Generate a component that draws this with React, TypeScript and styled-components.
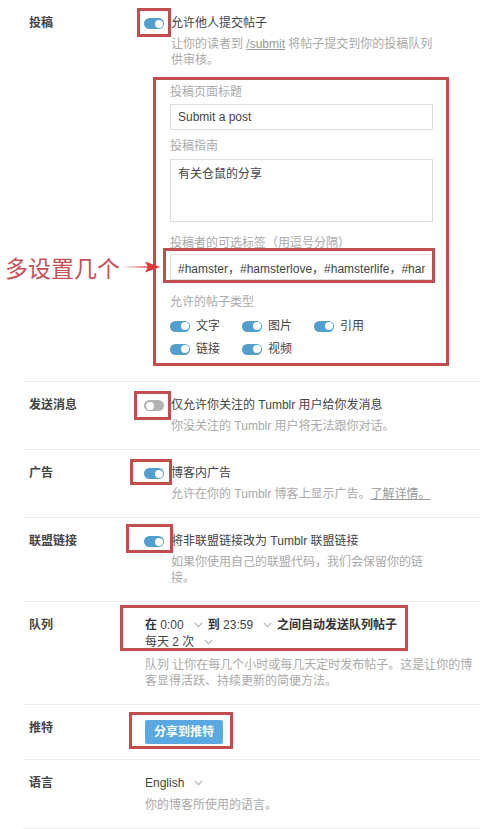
import React from "react";
import styled, { createGlobalStyle } from "styled-components";

const GlobalStyle = createGlobalStyle`
  body {
    margin: 0;
    background: #ffffff;
    font-family: "Liberation Sans", "Noto Sans CJK SC", sans-serif;
    font-size: 12px;
    color: #444444;
  }
`;

const Page = styled.div`
  width: 497px;
  position: relative;
`;

const SettingRow = styled.div<{ $last?: boolean }>`
  display: flex;
  margin-left: 23px;
  width: 457px;
  box-sizing: border-box;
  padding: 15px 0 15px 6px;
  border-bottom: 1px solid #ececec;
`;

const RowLabel = styled.div`
  flex: none;
  width: 116px;
  line-height: 16px;
  font-weight: bold;
  color: #444444;
`;

const RowBody = styled.div`
  flex: 1;
  min-width: 0;
`;

const ToggleLine = styled.div`
  display: flex;
  align-items: flex-start;
  gap: 7px;
  margin-left: -1px;
`;

const SwitchWrap = styled.div`
  position: relative;
  flex: none;
  margin-top: 3px;
`;

const Switch = styled.div<{ $on?: boolean }>`
  position: relative;
  width: 20px;
  height: 11px;
  border-radius: 6px;
  background: ${(p) => (p.$on ? "#529ecc" : "#b3b3b3")};
  &::after {
    content: "";
    position: absolute;
    top: 1.5px;
    left: ${(p) => (p.$on ? "10.5px" : "1.5px")};
    width: 8px;
    height: 8px;
    border-radius: 50%;
    background: #ffffff;
  }
`;

const TextCol = styled.div`
  width: 264px;
`;

const MainText = styled.div`
  line-height: 16px;
  color: #444444;
`;

const Desc = styled.div<{ $gap?: number }>`
  margin-top: ${(p) => p.$gap ?? 5}px;
  line-height: 16px;
  color: #a9a9a9;
`;

const DescLink = styled.span`
  color: #999999;
  text-decoration: underline;
`;

const Annot = styled.div<{ $t: number; $r: number; $b: number; $l: number }>`
  position: absolute;
  top: ${(p) => p.$t}px;
  right: ${(p) => p.$r}px;
  bottom: ${(p) => p.$b}px;
  left: ${(p) => p.$l}px;
  border: 3px solid #c24d50;
  pointer-events: none;
  z-index: 2;
`;

const SubmitBox = styled.div`
  margin: 9px 0 0 -18px;
  width: 296px;
  box-sizing: border-box;
  border: 3px solid #c24d50;
  padding: 4px 13px 6px 14px;
`;

const FieldLabel = styled.div<{ $gap?: number }>`
  margin-top: ${(p) => p.$gap ?? 0}px;
  line-height: 16px;
  color: #aaaaaa;
`;

const TextInput = styled.input<{ $gap?: number }>`
  display: block;
  width: 100%;
  height: 26px;
  margin: ${(p) => p.$gap ?? 0}px 0 0;
  box-sizing: border-box;
  border: 1px solid #dddddd;
  padding: 0 7px;
  font: inherit;
  color: #444444;
  background: #ffffff;
  outline: none;
`;

const TextArea = styled.textarea`
  display: block;
  width: 100%;
  height: 63px;
  margin: 5px 0 0;
  box-sizing: border-box;
  border: 1px solid #dddddd;
  padding: 6px 7px;
  font: inherit;
  line-height: 16px;
  color: #444444;
  resize: none;
  outline: none;
`;

const TagField = styled.div`
  position: relative;
  margin-top: 3px;
`;

const Callout = styled.div`
  position: absolute;
  left: -165px;
  top: 50%;
  transform: translateY(-50%);
  display: flex;
  align-items: center;
  gap: 1px;
  white-space: nowrap;
  z-index: 3;
`;

const CalloutText = styled.span`
  font-family: "Noto Sans CJK SC", sans-serif;
  font-size: 23px;
  line-height: 30px;
  color: #c65158;
`;

const PostTypes = styled.div`
  display: grid;
  grid-template-columns: repeat(3, 72px);
  row-gap: 7px;
  margin-top: 8px;
`;

const TypeItem = styled.div`
  display: flex;
  align-items: center;
  gap: 6px;
  line-height: 16px;
  color: #444444;
`;

const QueueBlock = styled.div`
  position: relative;
  display: inline-block;
`;

const QueueLine = styled.div`
  line-height: 17px;
  color: #444444;
  white-space: nowrap;
`;

const Strong = styled.span`
  font-weight: bold;
  color: #333333;
`;

const ChevronIcon = styled.svg<{ $after?: number }>`
  display: inline-block;
  vertical-align: middle;
  margin: -2px ${(p) => p.$after ?? 5}px 0 10px;
`;

const ButtonWrap = styled.div`
  position: relative;
  display: inline-block;
  vertical-align: top;
`;

const TweetButton = styled.button`
  display: block;
  height: 24px;
  padding: 0 9px;
  border: none;
  border-radius: 2px;
  background: #5aa8e0;
  color: #ffffff;
  font: inherit;
  font-weight: bold;
  line-height: 24px;
  cursor: pointer;
`;

function Chevron({ after }: { after?: number }) {
  return (
    <ChevronIcon $after={after} width="9" height="6" viewBox="0 0 9 6">
      <path d="M0.8 0.8 L4.5 4.6 L8.2 0.8" fill="none" stroke="#b4b4b4" strokeWidth="1.2" />
    </ChevronIcon>
  );
}

function Arrow() {
  return (
    <svg width="40" height="14" viewBox="0 0 40 14">
      <path d="M1 7 L28 6.3 L28 7.7 Z" fill="#e0393b" />
      <path d="M24 1.5 L39 7 L24 12.5 L27 7 Z" fill="#e0393b" />
    </svg>
  );
}

type Box = { t: number; r: number; b: number; l: number };

function Toggle({ on, box }: { on: boolean; box?: Box }) {
  return (
    <SwitchWrap>
      <Switch $on={on} />
      {box && <Annot $t={box.t} $r={box.r} $b={box.b} $l={box.l} />}
    </SwitchWrap>
  );
}

const postTypes = ["文字", "图片", "引用", "链接", "视频"];

export default function App() {
  return (
    <Page>
      <GlobalStyle />

      <SettingRow>
        <RowLabel>投稿</RowLabel>
        <RowBody>
          <ToggleLine>
            <Toggle on box={{ t: -10, r: -7, b: -8, l: -7 }} />
            <TextCol>
              <MainText>允许他人提交帖子</MainText>
              <Desc>
                让你的读者到 <DescLink>/submit</DescLink> 将帖子提交到你的投稿队列供审核。
              </Desc>
              <SubmitBox>
                <FieldLabel>投稿页面标题</FieldLabel>
                <TextInput $gap={4} readOnly defaultValue="Submit a post" />
                <FieldLabel $gap={8}>投稿指南</FieldLabel>
                <TextArea readOnly defaultValue="有关仓鼠的分享" />
                <FieldLabel $gap={13}>投稿者的可选标签（用逗号分隔）</FieldLabel>
                <TagField>
                  <TextInput
                    readOnly
                    defaultValue="#hamster，#hamsterlove，#hamsterlife，#hamsterdaily"
                  />
                  <Annot $t={-6} $r={-2} $b={-3} $l={-7} />
                  <Callout>
                    <CalloutText>多设置几个</CalloutText>
                    <Arrow />
                  </Callout>
                </TagField>
                <FieldLabel $gap={14}>允许的帖子类型</FieldLabel>
                <PostTypes>
                  {postTypes.map((t) => (
                    <TypeItem key={t}>
                      <Switch $on />
                      {t}
                    </TypeItem>
                  ))}
                </PostTypes>
              </SubmitBox>
            </TextCol>
          </ToggleLine>
        </RowBody>
      </SettingRow>

      <SettingRow>
        <RowLabel>发送消息</RowLabel>
        <RowBody>
          <ToggleLine>
            <Toggle on={false} box={{ t: -9, r: -7, b: -9, l: -10 }} />
            <TextCol>
              <MainText>仅允许你关注的 Tumblr 用户给你发消息</MainText>
              <Desc>你没关注的 Tumblr 用户将无法跟你对话。</Desc>
            </TextCol>
          </ToggleLine>
        </RowBody>
      </SettingRow>

      <SettingRow>
        <RowLabel>广告</RowLabel>
        <RowBody>
          <ToggleLine>
            <Toggle on box={{ t: -9, r: -8, b: -6, l: -14 }} />
            <TextCol>
              <MainText>博客内广告</MainText>
              <Desc>
                允许在你的 Tumblr 博客上显示广告。<DescLink>了解详情。</DescLink>
              </Desc>
            </TextCol>
          </ToggleLine>
        </RowBody>
      </SettingRow>

      <SettingRow>
        <RowLabel>联盟链接</RowLabel>
        <RowBody>
          <ToggleLine>
            <Toggle on box={{ t: -12, r: -9, b: -6, l: -18 }} />
            <TextCol>
              <MainText>将非联盟链接改为 Tumblr 联盟链接</MainText>
              <Desc>如果你使用自己的联盟代码，我们会保留你的链接。</Desc>
            </TextCol>
          </ToggleLine>
        </RowBody>
      </SettingRow>

      <SettingRow>
        <RowLabel>队列</RowLabel>
        <RowBody>
          <QueueBlock>
            <QueueLine>
              <Strong>在</Strong> 0:00
              <Chevron />
              <Strong>到</Strong> 23:59
              <Chevron />
              <Strong>之间自动发送队列帖子</Strong>
            </QueueLine>
            <QueueLine>
              每天 2 次
              <Chevron />
            </QueueLine>
            <Annot $t={-12} $r={-11} $b={0} $l={-25} />
          </QueueBlock>
          <Desc $gap={6}>
            队列 让你在每几个小时或每几天定时发布帖子。这是让你的博客显得活跃、持续更新的简便方法。
          </Desc>
        </RowBody>
      </SettingRow>

      <SettingRow>
        <RowLabel>推特</RowLabel>
        <RowBody>
          <ButtonWrap>
            <TweetButton>分享到推特</TweetButton>
            <Annot $t={-8} $r={-10} $b={-5} $l={-16} />
          </ButtonWrap>
        </RowBody>
      </SettingRow>

      <SettingRow>
        <RowLabel>语言</RowLabel>
        <RowBody>
          <QueueLine>
            English
            <Chevron />
          </QueueLine>
          <Desc>你的博客所使用的语言。</Desc>
        </RowBody>
      </SettingRow>
    </Page>
  );
}
